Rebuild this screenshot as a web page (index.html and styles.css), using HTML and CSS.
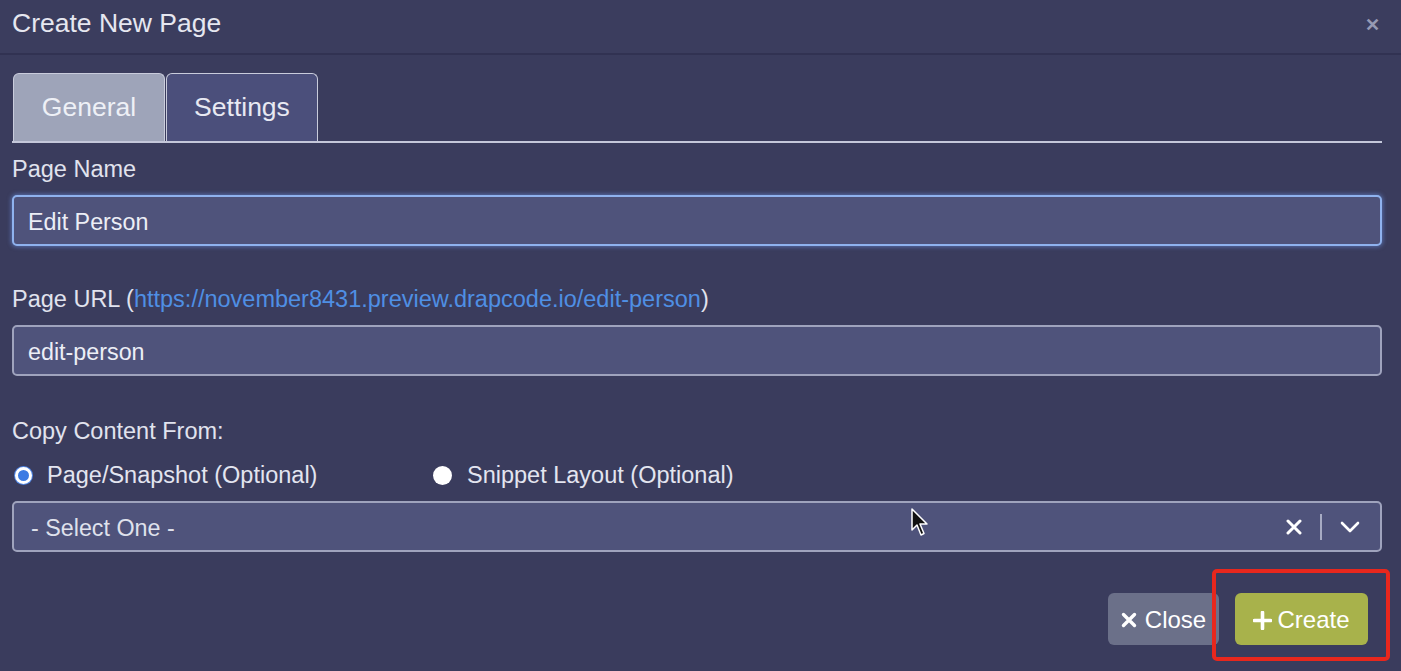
FILE: index.html
```
<!DOCTYPE html>
<html lang="en">
<head>
  <meta charset="UTF-8">
  <title>Create New Page</title>
  <link rel="stylesheet" href="styles.css">
</head>
<body>

  <div class="modal">
    <!-- Header -->
    <div class="modal-header">
      <h3 class="modal-title">Create New Page</h3>
      <span class="header-close">&#x2715;</span>
    </div>

    <div class="modal-body">
      <!-- Tabs -->
      <div class="tabs">
        <div class="tab active">General</div>
        <div class="tab">Settings</div>
      </div>

      <label class="field-label first">Page Name</label>
      <div class="input focused">Edit Person</div>

      <label class="field-label url">Page URL (<a href="#">https://november8431.preview.drapcode.io/edit-person</a>)</label>
      <div class="input">edit-person</div>

      <label class="field-label">Copy Content From:</label>
      <div class="radio-row">
        <div class="radio-option">
          <span class="radio checked"></span>
          <span>Page/Snapshot (Optional)</span>
        </div>
        <div class="radio-option">
          <span class="radio"></span>
          <span>Snippet Layout (Optional)</span>
        </div>
      </div>

      <div class="input select">
        <span class="placeholder">- Select One -</span>
        <div class="select-icons">
          <svg width="16" height="16" viewBox="0 0 16 16"><path d="M2 2 L14 14 M14 2 L2 14" stroke="#ffffff" stroke-width="3" stroke-linecap="round"/></svg>
          <span class="divider"></span>
          <svg width="20" height="12" viewBox="0 0 20 12"><path d="M2 2 L10 10 L18 2" fill="none" stroke="#ffffff" stroke-width="2.6" stroke-linecap="round" stroke-linejoin="round"/></svg>
        </div>
        <svg class="cursor" width="20" height="30" viewBox="0 0 20 30"><path d="M1 1 L1 22 L6 17 L10 27 L13 25.5 L9 16 L16 16 Z" fill="#111111" stroke="#ffffff" stroke-width="1.5" stroke-linejoin="round"/></svg>
      </div>

      <!-- Footer buttons -->
      <div class="modal-footer">
        <button class="btn btn-close">
          <svg width="16" height="16" viewBox="0 0 16 16"><path d="M2.5 2.5 L13.5 13.5 M13.5 2.5 L2.5 13.5" stroke="#ffffff" stroke-width="3.4" stroke-linecap="round"/></svg>
          Close
        </button>
        <div class="highlight-wrap">
          <button class="btn btn-create">
            <svg width="19" height="19" viewBox="0 0 19 19"><path d="M9.5 1.5 L9.5 17.5 M1.5 9.5 L17.5 9.5" stroke="#ffffff" stroke-width="3.6" stroke-linecap="round"/></svg>
            Create
          </button>
          <span class="highlight"></span>
        </div>
      </div>
    </div>
  </div>

</body>
</html>
```

FILE: styles.css
```
body {
  margin: 0;
  padding: 0;
  background: #3a3c5d;
  font-family: "Liberation Sans", Arial, sans-serif;
  color: #e3e5f0;
}

.modal {
  width: 1401px;
  height: 671px;
  overflow: hidden;
}

.modal-header {
  height: 53px;
  display: flex;
  align-items: center;
  justify-content: space-between;
  padding: 0 21px 0 12px;
  border-bottom: 2px solid #313252;
  background: #3b3d5e;
}

.modal-title {
  margin: 0 0 6px;
  font-size: 26.5px;
  font-weight: normal;
  color: #e6e7f0;
}

.header-close {
  font-size: 18px;
  font-weight: bold;
  color: #9699b3;
  margin-bottom: 4px;
}

.modal-body {
  padding: 0 19px 0 12px;
}

.tabs {
  display: flex;
  margin-top: 18px;
  border-bottom: 2px solid #c4c7da;
  padding-left: 1px;
}

.tab {
  width: 150px;
  height: 67px;
  display: flex;
  align-items: center;
  justify-content: center;
  font-size: 26.5px;
  color: #e8e9f2;
  background: #4b4f7b;
  border: 1px solid #c9ccdc;
  border-bottom: none;
  border-radius: 6px 6px 0 0;
  margin-right: 1px;
}

.tab.active {
  background: #9ea4b9;
  color: #eef0f6;
}

.field-label {
  display: block;
  font-size: 23.5px;
  line-height: 28px;
  height: 28px;
  margin-top: 41px;
  margin-bottom: 12px;
  color: #e1e3ee;
}

.field-label.first {
  margin-top: 12px;
}

.field-label.url {
  margin-top: 39px;
}

.field-label a {
  color: #4f8fe4;
  text-decoration: none;
}

.input {
  height: 44px;
  display: flex;
  align-items: center;
  padding: 3px 14px 0;
  background: #4f537b;
  border: 2px solid #9fa3bd;
  border-radius: 5px;
  font-size: 23.3px;
  color: #eceef6;
}

.input.focused {
  border-color: #8fb2ee;
  box-shadow: 0 0 4px 1px rgba(110, 150, 230, 0.55);
}

.radio-row {
  display: flex;
  margin-top: 16px;
  margin-bottom: 12px;
  height: 28px;
  align-items: center;
  font-size: 23.5px;
}

.radio-option {
  display: flex;
  align-items: center;
  gap: 15px;
}

.radio-option:first-child {
  width: 418px;
  padding-left: 3px;
}

.radio {
  width: 19px;
  height: 19px;
  border-radius: 50%;
  background: #ffffff;
  box-sizing: border-box;
}

.radio.checked {
  background: #3c7be3;
  border: 3px solid #ffffff;
  box-shadow: 0 0 0 1px #4f86e6;
  width: 17px;
  height: 17px;
}

.select {
  position: relative;
  justify-content: space-between;
  padding: 3px 20px 0 17px;
}

.select-icons {
  margin-top: -3px;
}

.placeholder {
  color: #dfe1ec;
}

.select-icons {
  display: flex;
  align-items: center;
  gap: 18px;
}

.divider {
  width: 2px;
  height: 26px;
  background: #a7abc3;
}

.cursor {
  position: absolute;
  left: 897px;
  top: 5px;
}

.modal-footer {
  display: flex;
  justify-content: flex-end;
  align-items: center;
  gap: 16px;
  margin-top: 41px;
  padding-right: 14px;
}

.btn {
  height: 52px;
  border: none;
  border-radius: 6px;
  display: flex;
  align-items: center;
  justify-content: center;
  gap: 5px;
  padding: 2px 0 0;
  font-family: "Liberation Sans", Arial, sans-serif;
  font-size: 24px;
  color: #ffffff;
}

.btn-close {
  width: 111px;
  gap: 8px;
  background: #6b7089;
}

.btn-create {
  width: 133px;
  background: #a8b24b;
}

.highlight-wrap {
  position: relative;
}

.highlight {
  position: absolute;
  left: -23px;
  top: -24px;
  width: 170px;
  height: 84px;
  border: 4px solid #e8271d;
  border-radius: 5px;
}
```
